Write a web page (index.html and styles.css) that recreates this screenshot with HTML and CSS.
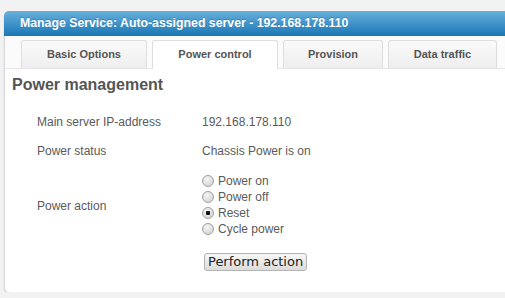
FILE: index.html
```html
<!DOCTYPE html>
<html lang="en">
<head>
    <meta charset="UTF-8">
    <title>Manage Service</title>
    <link rel="stylesheet" href="styles.css">
</head>
<body>
    <div class="panel">
        <div class="panel-title">Manage Service: Auto-assigned server - 192.168.178.110</div>
        <div class="tabs">
            <div class="tab">Basic Options</div>
            <div class="tab active">Power control</div>
            <div class="tab tab-prov">Provision</div>
            <div class="tab tab-data">Data traffic</div>
        </div>
        <div class="tab-body">
            <h2>Power management</h2>
            <div class="form-grid">
                <div class="lbl">Main server IP-address</div>
                <div class="val">192.168.178.110</div>

                <div class="lbl">Power status</div>
                <div class="val">Chassis Power is on</div>

                <div class="lbl">Power action</div>
                <div class="val radios">
                    <label><input type="radio" name="act"> Power on</label>
                    <label><input type="radio" name="act"> Power off</label>
                    <label><input type="radio" name="act" checked> Reset</label>
                    <label><input type="radio" name="act"> Cycle power</label>
                </div>

                <div></div>
                <div class="val"><button class="btn">Perform action</button></div>
            </div>
        </div>
    </div>
</body>
</html>
```

FILE: styles.css
```css
html, body {
    margin: 0;
    padding: 0;
    background: #f2f2f2;
    font-family: 'Liberation Sans', Arial, sans-serif;
    color: #5a5a5a;
}
body {
    padding: 11px 0 0 4px;
}
.panel {
    background: #fff;
    border-left: 1px solid #d8d8d8;
    border-radius: 5px 0 0 5px;
    box-shadow: 0 3px 2px #dadada;
    padding-bottom: 14px;
}
.panel-title {
    height: 25px;
    line-height: 24px;
    padding-left: 16px;
    margin-left: -1px;
    border-radius: 5px 0 0 0;
    background: linear-gradient(#67b0dd, #1a77b4);
    color: #fff;
    font-size: 12.3px;
    font-weight: bold;
    text-shadow: 0 -1px 0 rgba(0,0,0,0.2);
}
.tabs {
    display: flex;
    gap: 5px;
    padding: 4px 0 0 16px;
    border-bottom: 1px solid #e6e6e6;
    background: #fbfbfb;
}
.tab {
    width: 124px;
    height: 27px;
    line-height: 27px;
    text-align: center;
    font-size: 11px;
    font-weight: bold;
    color: #555;
    border: 1px solid #dedede;
    border-bottom: none;
    border-radius: 3px 3px 0 0;
    background: linear-gradient(#fafafa, #eeeeee);
}
.tab.active {
    background: #fff;
    margin-bottom: -1px;
    height: 28px;
}
.tab-prov { width: 98px; }
.tab-data { width: 107px; }
.tab-body {
    padding: 5px 0 0 7px;
}
h2 {
    margin: 0 0 12px 0;
    font-size: 16px;
    line-height: 22px;
    font-weight: bold;
    color: #555;
}
.form-grid {
    display: grid;
    grid-template-columns: 165px 1fr;
    margin-left: 25px;
    font-size: 12px;
    line-height: 15px;
}
.lbl, .val {
    padding: 7px 0;
    align-self: center;
}
.radios {
    padding: 7px 0 9px 0;
}
.radios label {
    display: flex;
    align-items: center;
    height: 16px;
}
.radios input {
    appearance: none;
    -webkit-appearance: none;
    width: 12px;
    height: 12px;
    margin: 0 4px 0 0;
    border: 1px solid #a0a0a0;
    border-radius: 50%;
    background: radial-gradient(circle at 40% 30%, #f4f4f4, #cfcfcf);
    box-sizing: border-box;
}
.radios input:checked {
    background: radial-gradient(circle, #111 0 2px, transparent 2.5px), radial-gradient(circle at 40% 30%, #f4f4f4, #cfcfcf);
}
.btn {
    margin-left: 2px;
    height: 18px;
    padding: 0 3px;
    font-family: 'DejaVu Sans', sans-serif;
    font-size: 13px;
    line-height: 16px;
    color: #222;
    border: 1px solid #b4b4b4;
    border-radius: 3px;
    background: linear-gradient(#f7f7f7, #dcdcdc);
}
```
